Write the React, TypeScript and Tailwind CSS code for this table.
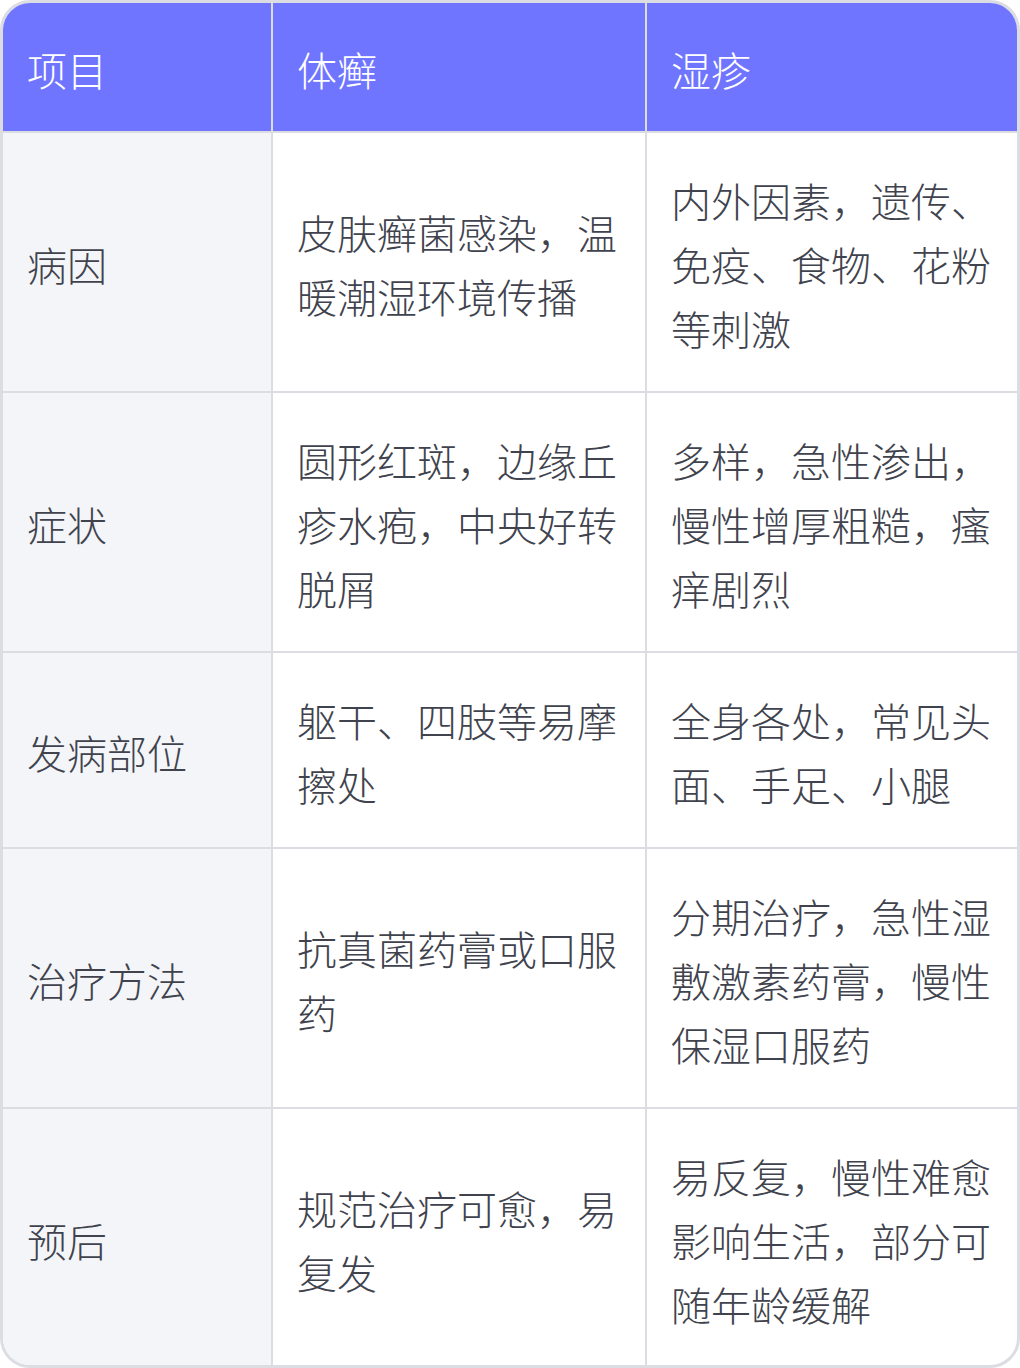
import React from 'react';

const rows = [
  { item: '病因', tinea: '皮肤癣菌感染，温暖潮湿环境传播', eczema: '内外因素，遗传、免疫、食物、花粉等刺激' },
  { item: '症状', tinea: '圆形红斑，边缘丘疹水疱，中央好转脱屑', eczema: '多样，急性渗出，慢性增厚粗糙，瘙痒剧烈' },
  { item: '发病部位', tinea: '躯干、四肢等易摩擦处', eczema: '全身各处，常见头面、手足、小腿' },
  { item: '治疗方法', tinea: '抗真菌药膏或口服药', eczema: '分期治疗，急性湿敷激素药膏，慢性保湿口服药' },
  { item: '预后', tinea: '规范治疗可愈，易复发', eczema: '易反复，慢性难愈影响生活，部分可随年龄缓解' },
];

const font = { fontFamily: '"Noto Sans CJK SC", "Noto Sans", sans-serif' };

export default function App() {
  return (
    <div className="w-[1020px] h-[1368px] bg-white" style={font}>
      <div className="flex h-full flex-col overflow-hidden rounded-[30px] border-[3px] border-[#dcdde3] text-[40px] font-light leading-[64px] text-[#40434d]">
        <div className="grid grid-cols-[270px_374px_1fr] border-b-2 border-[#dcdde3] bg-[#7075ff] text-white">
          <div className="border-r-2 border-[#dcdde3] px-[24px] pt-[34px] pb-[30px]">项目</div>
          <div className="border-r-2 border-[#dcdde3] px-[24px] pt-[34px] pb-[30px]">体癣</div>
          <div className="px-[24px] pt-[34px] pb-[30px]">湿疹</div>
        </div>
        {rows.map((r, i) => (
          <div
            key={i}
            className={`grid grid-cols-[270px_374px_1fr] ${i < rows.length - 1 ? 'border-b-2 border-[#dcdde3]' : 'flex-1'}`}
          >
            <div className="flex items-center border-r-2 border-[#dcdde3] bg-[#f4f5f9] px-[24px] pt-[35px] pb-[31px]">{r.item}</div>
            <div className="flex items-center border-r-2 border-[#dcdde3] px-[24px] pt-[35px] pb-[31px]">{r.tinea}</div>
            <div className="flex items-center pl-[24px] pr-[20px] pt-[35px] pb-[31px]">{r.eczema}</div>
          </div>
        ))}
      </div>
    </div>
  );
}
